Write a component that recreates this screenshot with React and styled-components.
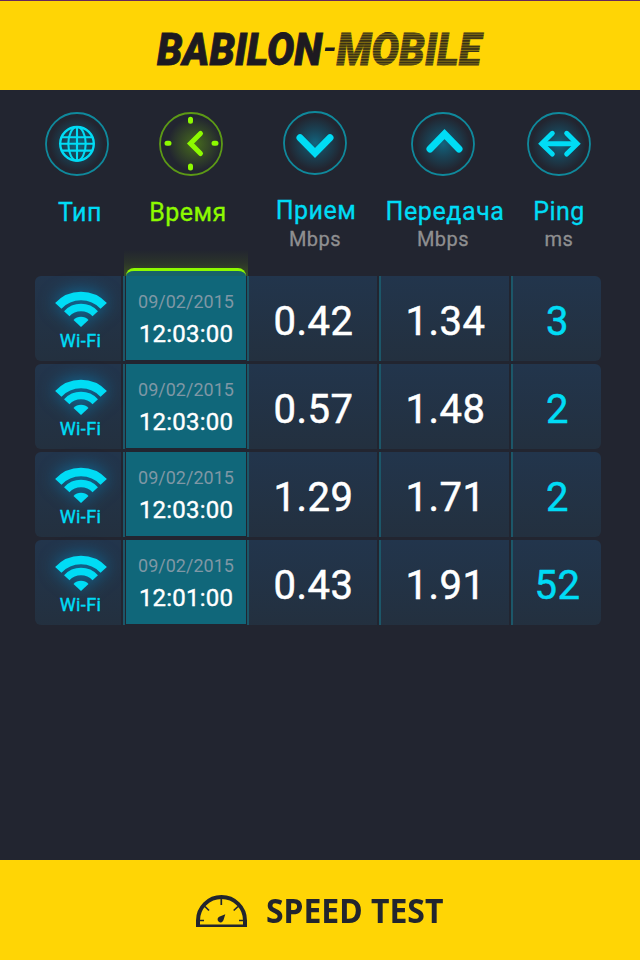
import React from 'react';
import styled, { createGlobalStyle, css } from 'styled-components';

const Global = createGlobalStyle`
  body { margin: 0; background: #222530; }
  * { box-sizing: border-box; }
`;
const cyan = '#00dcf5';
const lime = '#8dfa00';

const Screen = styled.main`
  width: 640px; height: 960px; display: flex; flex-direction: column;
  background: #222530; font-family: Roboto, sans-serif; overflow: hidden;
`;
const TopBar = styled.header`
  height: 90px; flex: none; background: #ffd505; border-top: 1px solid #67295c;
  svg { display: block; }
`;
const Content = styled.section`
  height: 770px; flex: none; padding: 21px 39px 0 35px;
`;
const Head = styled.div`
  display: grid; grid-template-columns: 84px 144px 104px 152px 80px;
  height: 165px;
`;
const HeadCell = styled.div`
  display: flex; flex-direction: column; align-items: center;
  color: ${p => (p.$active ? lime : cyan)};
  padding-top: ${p => p.$top || 0}px;
  svg { display: block; flex: none; overflow: visible; }
`;
const Label = styled.div`
  font-size: 25px; line-height: 30px; margin-top: ${p => p.$gap || 21}px; white-space: nowrap;
  letter-spacing: ${p => p.$track || 0.5}px;
  margin-left: ${p => p.$shift || 0}px;
  -webkit-text-stroke: .3px currentColor;
`;
const Unit = styled.div`
  font-size: 20px; line-height: 24px; color: #8f8f90; letter-spacing: .5px;
  -webkit-text-stroke: .3px currentColor; margin-top: ${p => p.$gap || 0}px;
`;
const Rows = styled.div`display: flex; flex-direction: column; gap: 3px;`;
const Row = styled.div`
  display: grid; grid-template-columns: 88px 124px 132px 132px 90px;
  height: 85px;
`;
const panel = css`background: linear-gradient(#22354c, #23303f);`;
const Cell = styled.div`
  ${panel}
  display: flex; align-items: center; justify-content: center;
  margin-right: ${p => (p.$last ? 0 : 2)}px;
  border-left: 2px solid #1c5769; color: ${p => (p.$accent ? cyan : '#fff')};
  font-size: 40px; font-weight: 400; letter-spacing: .5px; padding: 5px 0 0 1px;
  -webkit-text-stroke: .5px currentColor;
  border-radius: ${p => (p.$last ? '0 6px 6px 0' : 0)};
`;
const TypeCell = styled.div`
  ${panel}
  margin-right: 2px;
  border-radius: 6px 0 0 6px; color: ${cyan}; font-size: 18px; line-height: 22px;
  letter-spacing: .4px; -webkit-text-stroke: .45px currentColor;
  display: flex; flex-direction: column; align-items: center; padding: 16px 0 0 5px;
  svg { display: block; overflow: visible; margin-bottom: 2px; filter: drop-shadow(0 0 9px #0090d0c8); }
`;
const TimeCell = styled.div`
  border-left: 2px solid #1c5769; padding-left: 1px; position: relative; margin-right: 1px;
`;
const TimeBody = styled.div`
  height: 84px; background: #10677a; color: #fff; text-align: center;
  font-size: 24px; line-height: 28px; padding-top: 14px;
  letter-spacing: .2px; -webkit-text-stroke: .4px currentColor;
`;
const DateText = styled.div`
  font-size: 18px; line-height: 24px; letter-spacing: 0; color: #7f97a5; margin-bottom: 6px;
  -webkit-text-stroke: 0;
`;
const Glow = styled.div`
  position: absolute; left: -1px; top: -26px; width: 124px; height: 26px;
  background: linear-gradient(to top, rgba(95, 140, 20, .42), rgba(80, 110, 20, .2) 50%, transparent);
`;
const Tab = styled.div`
  position: absolute; left: 1px; top: -8px; width: 120px; height: 8px;
  border-top: 3px solid ${lime}; border-radius: 8px 8px 0 0; background: #17626a;
`;
const Bottom = styled.footer`
  height: 100px; flex: none; background: #ffd505; color: #22252e;
  display: flex; align-items: center; padding-left: 196px; gap: 19px;
  font: 700 34px 'Noto Sans', sans-serif;
  svg { flex: none; margin-top: 2px; }
`;
const BottomText = styled.span`
  display: block; white-space: nowrap; transform: scaleX(.94); transform-origin: 0 50%;
`;

function Logo() {
  return (
    <svg width="640" height="89" viewBox="0 1 640 89" fontFamily="Roboto, sans-serif" fontSize="45" fontWeight="900" fontStyle="italic">
      <defs>
        <pattern id="stripes" width="10" height="2.7" patternUnits="userSpaceOnUse" y="32">
          <rect width="10" height="2.7" fill="#8a750e" /><rect width="10" height="1.6" fill="#332c16" />
        </pattern>
      </defs>
      <text x="157" y="64.5" textLength="165" lengthAdjust="spacingAndGlyphs" fill="#1d1a20" stroke="#1d1a20" strokeWidth=".8">BABILON</text>
      <path d="M325.500 47.500h9.500l-.7 3.500h-9.500z" fill="#1d1a20" />
      <text x="336.500" y="64.5" textLength="144.500" lengthAdjust="spacingAndGlyphs" fill="url(#stripes)" stroke="url(#stripes)" strokeWidth=".8">MOBILE</text>
    </svg>
  );
}

const Ring = ({ id, children, active }) => (
  <svg width="64" height="64" viewBox="0 0 64 64" fill="none" stroke="currentColor">
    <defs>
      <radialGradient id={id}>
        <stop offset="0" stopColor={active ? '#5f9a10' : '#078fb4'} stopOpacity=".6" />
        <stop offset=".5" stopColor={active ? '#5f9a10' : '#0784a8'} stopOpacity=".3" />
        <stop offset="1" stopColor={active ? '#5f9a10' : '#0784a8'} stopOpacity="0" />
      </radialGradient>
    </defs>
    <circle cx={active ? 36 : 32} cy="32" r="27" fill={`url(#${id})`} stroke="none" />
    <circle cx="32" cy="32" r="31" strokeWidth="1.8" strokeOpacity=".55" />
    {children}
  </svg>
);

const Globe = () => (
  <Ring id="glow-globe">
    <g strokeWidth="2.1">
      <circle cx="32" cy="31.800" r="16.800" strokeWidth="2.4" />
      <ellipse cx="32" cy="31.800" rx="8.700" ry="16.800" />
      <path d="M32 15v34M15 31.800h34M17 25.200h30M17 38.600h30" />
    </g>
  </Ring>
);
const Clock = () => (
  <Ring id="glow-clock" active>
    <path d="M31.500 7.300v2M31.500 54v2M8 31.300h2M55 31.300h2" strokeWidth="5" strokeLinecap="round" />
    <path d="M41.500 21.500L31.500 31.500L41.500 41.500" strokeWidth="5" strokeLinecap="round" />
  </Ring>
);
const Down = () => <Ring id="glow-down"><path d="M17 26.700L32 42L47 26.700" strokeWidth="7" strokeLinecap="round" /></Ring>;
const Up = () => <Ring id="glow-up"><path d="M19 37L33.500 22L48 37" strokeWidth="7" strokeLinecap="round" /></Ring>;
const Both = () => (
  <Ring id="glow-both">
    <path d="M25.300 21.300L14.700 31.700L25.300 42M39.700 21.300L50.200 31.700L39.700 42" strokeWidth="5" strokeLinecap="round" />
    <path d="M15 31.700H50" strokeWidth="5" />
  </Ring>
);

const Wifi = () => (
  <svg width="52" height="36" viewBox="0 0 52 36" fill="none" stroke={cyan}>
    <path d="M26 35L18.500 28A10.300 10.300 0 0 1 33.500 28Z" fill={cyan} stroke="none" />
    <path d="M11.750 21.700A19.500 19.500 0 0 1 40.250 21.700" strokeWidth="7.400" />
    <path d="M3.300 13.900A31 31 0 0 1 48.700 13.900" strokeWidth="8.600" />
  </svg>
);
const Gauge = () => (
  <svg width="51" height="32" viewBox="0 0 51 32" fill="none" stroke="#22252e">
    <path d="M2 32V25.500a23.500 23.500 0 0 1 47 0V32" strokeWidth="4" />
    <path d="M0 30.800H51" strokeWidth="2.400" />
    <path d="M25.300 3v7M4 25.500h4M43 25.500h4M9 11.500l4 4M42 11.500l-4.300 4" strokeWidth="1.700" />
    <path d="M29.300 19.300l-1.800 5.700a3 3 0 1 1-4.300-3.300z" fill="#22252e" stroke="none" />
  </svg>
);

const data = [
  ['12:03:00', '0.42', '1.34', '3'],
  ['12:03:00', '0.57', '1.48', '2'],
  ['12:03:00', '1.29', '1.71', '2'],
  ['12:01:00', '0.43', '1.91', '52'],
];

export default function App() {
  return (
    <Screen>
      <Global />
      <TopBar><Logo /></TopBar>
      <Content>
        <Head>
          <HeadCell $top={1}><Globe /><Label $shift={6} $gap={22}>Тип</Label></HeadCell>
          <HeadCell $active $top={1}><Clock /><Label $shift={-6} $gap={22}>Время</Label></HeadCell>
          <HeadCell><Down /><Label $shift={2}>Прием</Label><Unit $gap={1}>Mbps</Unit></HeadCell>
          <HeadCell $top={1}><Up /><Label $track={0.6} $shift={4}>Передача</Label><Unit>Mbps</Unit></HeadCell>
          <HeadCell $top={1}><Both /><Label>Ping</Label><Unit>ms</Unit></HeadCell>
        </Head>
        <Rows>
          {data.map(([t, rx, tx, ping], i) => (
            <Row key={i}>
              <TypeCell><Wifi />Wi-Fi</TypeCell>
              <TimeCell>
                {i === 0 && <><Glow /><Tab /></>}
                <TimeBody><DateText>09/02/2015</DateText>{t}</TimeBody>
              </TimeCell>
              <Cell>{rx}</Cell><Cell>{tx}</Cell><Cell $accent $last>{ping}</Cell>
            </Row>
          ))}
        </Rows>
      </Content>
      <Bottom><Gauge /><BottomText>SPEED TEST</BottomText></Bottom>
    </Screen>
  );
}
